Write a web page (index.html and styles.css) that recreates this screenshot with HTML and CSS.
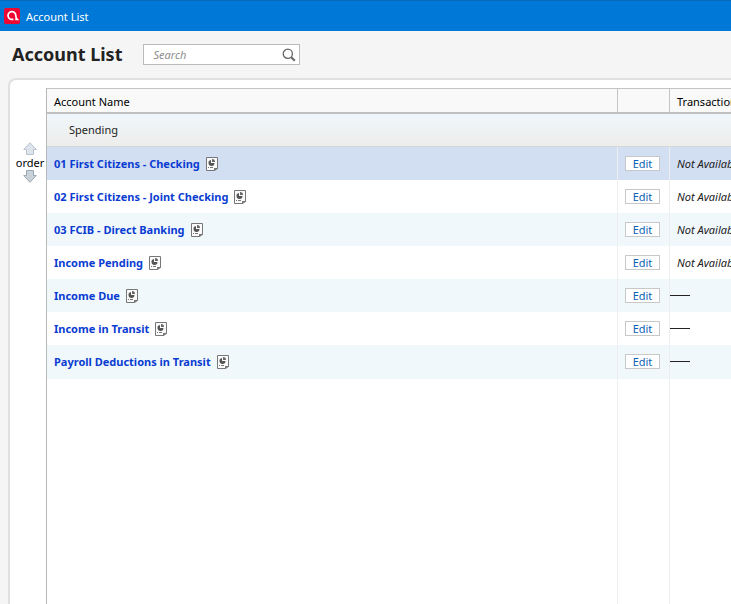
FILE: index.html
```html
<!DOCTYPE html>
<html lang="en">
<head>
    <meta charset="UTF-8">
    <meta name="viewport" content="width=device-width, initial-scale=1.0">
    <title>Account List</title>
    <link rel="stylesheet" href="styles.css">
</head>
<body>
    <!-- Shared icons -->
    <svg class="sprite" aria-hidden="true">
        <symbol id="report" viewBox="0 0 12 14">
            <path d="M.5.5h11v11H8.5v2h-8z" fill="#fafafa" stroke="#777"/>
            <path d="M8.5 13.5v-2h3z" fill="#777" stroke="#777"/>
            <path d="M5 3v3h3.5A3 3 0 1 1 5 3z" fill="#555"/>
            <path d="M6 2a3 3 0 0 1 3 3H6z" fill="#666"/>
            <path d="M2 10.5h1M4 10.5h3" stroke="#777"/>
        </symbol>
    </svg>

    <div class="titlebar">
        <svg class="logo" viewBox="0 0 16 16" aria-hidden="true">
            <rect width="16" height="16" rx="2" fill="#ee0733"/>
            <path d="M9.4 11.4H8A3.9 3.9 0 1 1 11.8 7.6c0 1.9.3 2.8 1.4 3.8h-2" fill="none" stroke="#fff" stroke-width="1.7"/>
        </svg>
        <span>Account List</span>
    </div>

    <div class="header">
        <h1>Account List</h1>
        <form class="search">
            <input type="text" name="search" placeholder="Search" aria-label="Search">
            <button type="button" aria-label="Find">
                <svg viewBox="0 0 14 14" fill="none" stroke="#666">
                    <circle cx="5.8" cy="5.8" r="4.6" stroke-width="1.3"/>
                    <path d="M9.2 9.2l3.6 3.6" stroke-width="2"/>
                </svg>
            </button>
        </form>
    </div>

    <div class="panel">
        <div class="order">
            <button type="button" aria-label="Move up">
                <svg viewBox="0 0 14 13"><path d="M7 .7l6.2 6.8h-2.7v5h-7v-5H.8z" fill="#dde4ec" stroke="#b9c3cf"/></svg>
            </button>
            <span>order</span>
            <button type="button" aria-label="Move down">
                <svg viewBox="0 0 14 13"><path d="M7 12.3L.8 5.5h2.7v-5h7v5h2.7z" fill="#c9d1d9" stroke="#9ba7b0"/></svg>
            </button>
        </div>

        <table class="accounts">
            <thead>
                <tr>
                    <th>Account Name</th>
                    <th class="col-edit"></th>
                    <th class="col-trans">Transactions</th>
                </tr>
            </thead>
            <tbody>
                <tr class="group">
                    <td colspan="3">Spending</td>
                </tr>
                <tr class="selected">
                    <td><a href="#">01 First Citizens - Checking</a><svg class="report"><use href="#report"/></svg></td>
                    <td><button type="button" class="edit">Edit</button></td>
                    <td class="na">Not Available</td>
                </tr>
                <tr>
                    <td><a href="#">02 First Citizens - Joint Checking</a><svg class="report"><use href="#report"/></svg></td>
                    <td><button type="button" class="edit">Edit</button></td>
                    <td class="na">Not Available</td>
                </tr>
                <tr class="alt">
                    <td><a href="#">03 FCIB - Direct Banking</a><svg class="report"><use href="#report"/></svg></td>
                    <td><button type="button" class="edit">Edit</button></td>
                    <td class="na">Not Available</td>
                </tr>
                <tr>
                    <td><a href="#">Income Pending</a><svg class="report"><use href="#report"/></svg></td>
                    <td><button type="button" class="edit">Edit</button></td>
                    <td class="na">Not Available</td>
                </tr>
                <tr class="alt">
                    <td><a href="#">Income Due</a><svg class="report"><use href="#report"/></svg></td>
                    <td><button type="button" class="edit">Edit</button></td>
                    <td class="none"><hr></td>
                </tr>
                <tr>
                    <td><a href="#">Income in Transit</a><svg class="report"><use href="#report"/></svg></td>
                    <td><button type="button" class="edit">Edit</button></td>
                    <td class="none"><hr></td>
                </tr>
                <tr class="alt">
                    <td><a href="#">Payroll Deductions in Transit</a><svg class="report"><use href="#report"/></svg></td>
                    <td><button type="button" class="edit">Edit</button></td>
                    <td class="none"><hr></td>
                </tr>
                <tr class="filler">
                    <td></td>
                    <td></td>
                    <td></td>
                </tr>
            </tbody>
        </table>
    </div>
</body>
</html>
```

FILE: styles.css
```css
* {
    box-sizing: border-box;
}

body {
    margin: 0;
    height: 100vh;
    display: flex;
    flex-direction: column;
    overflow: hidden;
    background-color: #f5f5f5;
    color: #222;
    font-family: "Noto Sans", "Open Sans", sans-serif;
    font-size: 11px;
}

button {
    font-family: inherit;
    cursor: pointer;
}

svg {
    display: block;
}

.sprite {
    display: none;
}

.titlebar {
    display: flex;
    align-items: center;
    flex: none;
    gap: 6px;
    height: 31px;
    padding: 0 4px;
    border-top: 1px solid #0a68b8;
    background-color: #0078d7;
    color: #fff;
    font-size: 11px;
}

.logo {
    width: 16px;
    height: 16px;
}

.header {
    display: flex;
    align-items: center;
    flex: none;
    gap: 21px;
    height: 47px;
    padding: 0 12px;
}

h1 {
    margin: 0;
    padding-bottom: 2px;
    font-size: 18px;
    font-weight: 700;
}

.search {
    display: flex;
    align-items: center;
    width: 157px;
    height: 21px;
    border: 1px solid #bbb;
    background-color: #fff;
}

.search input {
    flex: 1;
    min-width: 0;
    padding: 0 0 0 9px;
    border: none;
    outline: none;
    background: none;
    font-family: inherit;
    font-size: 11px;
    font-style: italic;
}

.search input::placeholder {
    color: #8c8c8c;
}

.search button {
    padding: 0 3px;
    border: none;
    background: none;
}

.search svg {
    width: 14px;
    height: 14px;
}

.panel {
    display: flex;
    flex: 1;
    min-height: 0;
    margin-left: 8px;
    padding-top: 8px;
    border: 2px solid #e0e0e0;
    border-width: 2px 0 0 2px;
    border-top-left-radius: 8px;
    background-color: #fff;
}

.order {
    display: flex;
    flex-direction: column;
    align-items: center;
    flex: none;
    width: 36px;
    padding: 54px 0 0 4px;
    color: #000;
    line-height: 15px;
}

.order button {
    padding: 0;
    border: none;
    background: none;
}

.order svg {
    width: 14px;
    height: 13px;
}

.accounts {
    flex: 1;
    width: 100%;
    table-layout: fixed;
    border-collapse: separate;
    border-spacing: 0;
    border-left: 1px solid #b8b8b8;
}

.accounts th,
.accounts td {
    height: 33px;
    padding: 0 7px;
    overflow: hidden;
    text-align: left;
    vertical-align: middle;
    white-space: nowrap;
}

.accounts th {
    height: 26px;
    padding-top: 2px;
    border-top: 1px solid #c4c4c4;
    border-bottom: 2px solid #c0c0c0;
    background-color: #f9f9f9;
    font-weight: 400;
    color: #000;
}

.accounts th + th {
    border-left: 1px solid #c4c4c4;
}

.accounts td + td {
    border-left: 1px solid #eee;
}

.accounts .col-edit {
    width: 52px;
}

.accounts .col-trans {
    width: 62px;
}

.accounts .group td {
    padding-left: 22px;
    padding-bottom: 2px;
    border-bottom: 1px solid #d5d8d8;
    background-image: linear-gradient(#f0f7fb, #ededeb);
}

.accounts .selected {
    background-color: #d2def2;
}

.accounts .alt {
    background-color: #f0f8fc;
}

.accounts a {
    color: #0a3cd2;
    font-weight: 700;
    text-decoration: none;
}

.report {
    display: inline-block;
    width: 12px;
    height: 14px;
    margin-left: 6px;
    vertical-align: text-bottom;
}

.edit {
    display: block;
    width: 35px;
    height: 15px;
    padding: 0;
    border: 1px solid #c8c8c8;
    background-color: #fff;
    color: #0b62b5;
    font-size: 11px;
    line-height: 13px;
}

.na {
    font-style: italic;
}

.accounts .none {
    padding: 0;
}

.none hr {
    width: 20px;
    margin: 0;
    border: none;
    border-top: 1px solid #222;
}

.accounts .filler td {
    height: calc(100vh - 379px);
}
```
